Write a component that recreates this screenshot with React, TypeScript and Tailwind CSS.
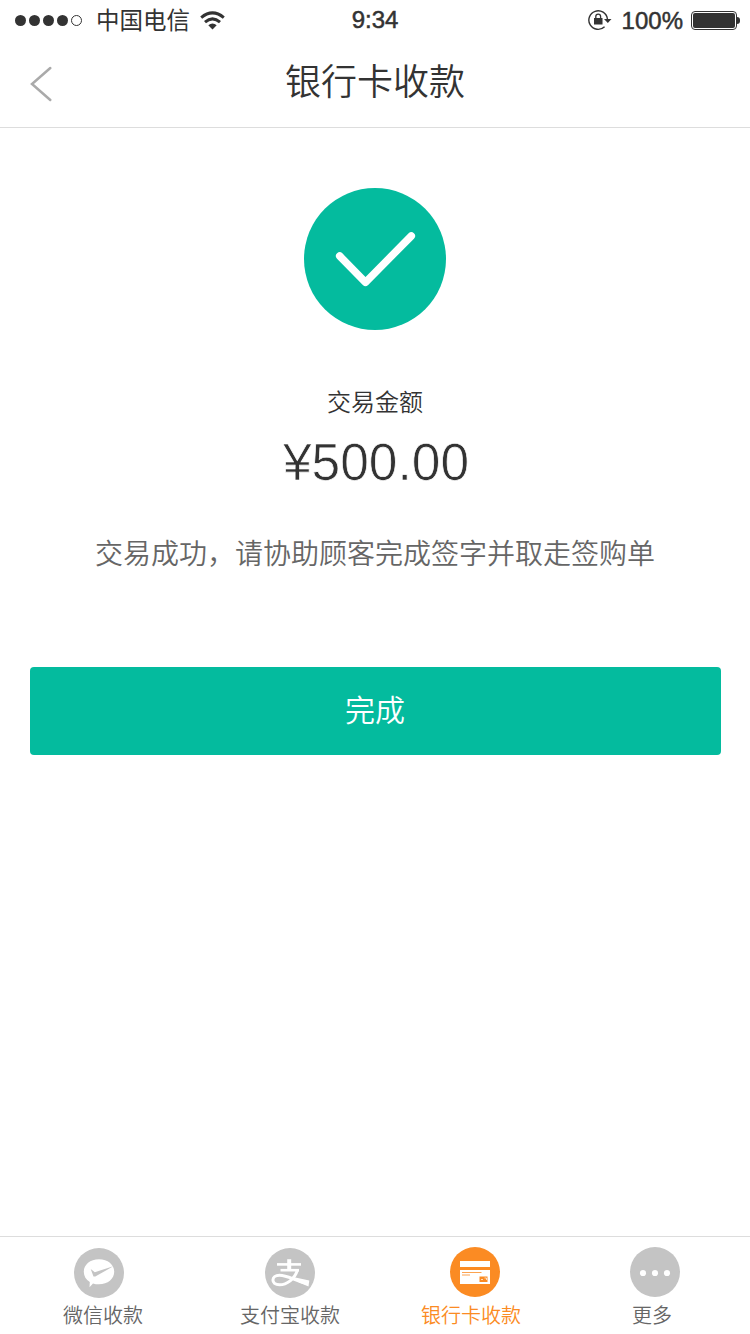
import type { ReactNode } from 'react'
import clsx from 'clsx'

export default function App() {
  return (
    <div
      className="w-[750px] h-[1334px] flex flex-col bg-white text-[#333]
                 font-['Liberation_Sans','Noto_Sans_CJK_SC',sans-serif] font-[350] overflow-hidden"
    >
      <StatusBar />
      <Header />
      <Result />
      <TabBar />
    </div>
  )
}

// --- Status bar ---
function StatusBar() {
  return (
    <div className="h-10 shrink-0 grid grid-cols-3 items-center pl-[15px] pr-[10px] text-2xl leading-none whitespace-nowrap">
      <div className="flex items-center">
        <div className="flex gap-[3px]">
          {[1, 2, 3, 4].map(i => (
            <span key={i} className="size-[11px] rounded-full bg-[#333]" />
          ))}
          <span className="size-[11px] rounded-full border border-[#333]" />
        </div>
        <span className="ml-[14px] pt-[3px] text-[23.5px] font-normal">中国电信</span>
        <WifiIcon />
      </div>
      <span className="text-center pr-[5px] [-webkit-text-stroke:0.5px_#333]">9:34</span>
      <div className="flex items-center justify-end">
        <RotationLockIcon />
        <span className="ml-[10px] mr-2 pt-px [-webkit-text-stroke:0.5px_#333]">100%</span>
        <div className="w-[46px] h-[19px] shrink-0 rounded-[4px] border border-[#333] p-px">
          <div className="w-full h-full rounded-[2px] bg-[#333]" />
        </div>
        <span className="w-[3px] h-[7px] shrink-0 rounded-r-full bg-[#333]" />
      </div>
    </div>
  )
}

function WifiIcon() {
  return (
    <svg className="ml-[10px]" width="25" height="19" viewBox="0 0 25 19" fill="none" stroke="#333" strokeWidth="3">
      <path d="M1.2 6.6Q12.5-2.8 23.8 6.6" />
      <path d="M5 11.2Q12.5 4.6 20 11.2" />
      <path d="M8.3 14.3Q12.5 10.8 16.7 14.3L12.5 18.5Z" fill="#333" stroke="none" />
    </svg>
  )
}

function RotationLockIcon() {
  return (
    <svg className="shrink-0" width="24" height="22" viewBox="0 0 24 22" fill="none" stroke="#333">
      <path d="M16.6 17.8A9.3 9.3 0 1 1 19.4 10" strokeWidth="1.4" />
      <path d="M16 10h7.5l-3.7 4z" fill="#333" stroke="none" />
      <rect x="6" y="9" width="8.5" height="6.5" fill="#333" stroke="none" />
      <path d="M7.8 10V7.500a2.400 2.400 0 0 1 4.800 0V10" strokeWidth="1.3" />
    </svg>
  )
}

// --- Title bar ---
function Header() {
  return (
    <header className="h-[88px] shrink-0 grid grid-cols-[60px_1fr_60px] items-center border-b border-[#ddd]">
      <svg className="ml-[29px]" width="24" height="36" viewBox="0 0 24 36" fill="none" stroke="#aaa" strokeWidth="2.5" strokeLinecap="round">
        <path d="M21.3 2L3 18l18.3 16" />
      </svg>
      <h1 className="text-center text-4xl leading-none pb-px">银行卡收款</h1>
    </header>
  )
}

// --- Payment result ---
function Result() {
  return (
    <main className="flex-1 flex flex-col items-center px-[30px] pt-[60px]">
      <svg className="shrink-0" width="142" height="142" viewBox="0 0 142 142" fill="none">
        <circle cx="71" cy="71" r="71" fill="#04bb9e" />
        <path d="M35.7 68L61.5 94.3L107.3 48" stroke="#fff" strokeWidth="7.5" strokeLinecap="round" strokeLinejoin="round" />
      </svg>
      <p className="mt-[61px] text-2xl leading-6">交易金额</p>
      <p className="mt-[21px] ml-[2px] text-[51.5px] leading-[52px] [-webkit-text-stroke:0.7px_#fff]">¥500.00</p>
      <p className="mt-[53px] text-[28px] leading-7 text-[#666]">交易成功，请协助顾客完成签字并取走签购单</p>
      <button className="w-[691px] h-[88px] mt-[98px] pb-px shrink-0 rounded bg-[#04bb9e] text-white text-[30px]">完成</button>
    </main>
  )
}

// --- Bottom tabs ---
function TabBar() {
  return (
    <nav className="h-[98px] shrink-0 flex border-t border-[#ddd] pl-[63px]">
      <Tab label="微信收款" className="w-20 pt-[11px]" iconClass="mr-[9px]">
        <path
          d="M25 11.3c8.8 0 15.2 5.4 15.2 12.4S33.800 36.300 25 36.300c-2.200 0-4.200-.3-6-.9L15.500 39.300l.3-5.300C12 31.700 9.800 28 9.800 23.700 9.800 16.700 16.200 11.300 25 11.300Z"
          fill="#fff"
        />
        <path d="M16.700 21L20.800 24.200L39.300 18.300L21.300 28.600L19.500 28.600Z" fill="#c4c4c4" />
      </Tab>
      <Tab label="支付宝收款" className="w-[100px] ml-[97px] pt-[11px]">
        <g stroke="#fff" fill="none">
          <path d="M24.2 11.2V21" strokeWidth="4" />
          <path d="M12 16.4H36" strokeWidth="2.6" />
          <path d="M15.5 22.2H34" strokeWidth="2.6" />
          <path d="M32.3 22.5C29.5 31 22 36.8 14.5 36.8C5.5 36.8 6 27.3 14.5 27.3C23 27.3 29 32.5 42.5 35.8" strokeWidth="3" />
        </g>
        <path d="M27 28.8L44.3 32.5L43.5 38.500L34 34.500Z" fill="#fff" />
      </Tab>
      <Tab label="银行卡收款" active className="w-[100px] ml-[81px] pt-[10px]" iconClass="ml-[7px]">
        <path d="M10 14h30v6H10zM10 23h30v14H10z" fill="#fff" />
        <path d="M12 25.5h19.5M12 28h8" stroke="#fb8b23" strokeWidth=".8" />
        <path d="M29.5 29.5h8v5.5h-8z" fill="#fb8b23" />
        <path d="M31 32.5h2M34.5 31h2v2" stroke="#fff" strokeWidth=".7" fill="none" />
      </Tab>
      <Tab label="更多" className="w-10 ml-[111px] pt-[10px]" iconClass="-mr-[5px]">
        <circle cx="13" cy="26" r="3.1" fill="#fff" />
        <circle cx="25" cy="26" r="3.1" fill="#fff" />
        <circle cx="37" cy="26" r="3.1" fill="#fff" />
      </Tab>
    </nav>
  )
}

function Tab({
  label,
  active,
  className,
  iconClass,
  children,
}: {
  label:      string
  active?:    boolean
  className?: string
  iconClass?: string
  children:   ReactNode
}) {
  return (
    <a
      className={clsx(
        'flex flex-col items-center justify-between pb-[8px] text-xl leading-5 whitespace-nowrap',
        active ? 'text-[#fb8b23]' : 'text-[#666]',
        className,
      )}
    >
      <svg className={clsx('shrink-0', iconClass)} width="50" height="50" viewBox="0 0 50 50">
        <circle cx="25" cy="25" r="25" fill={active ? '#fb8b23' : '#c4c4c4'} />
        {children}
      </svg>
      <span>{label}</span>
    </a>
  )
}
